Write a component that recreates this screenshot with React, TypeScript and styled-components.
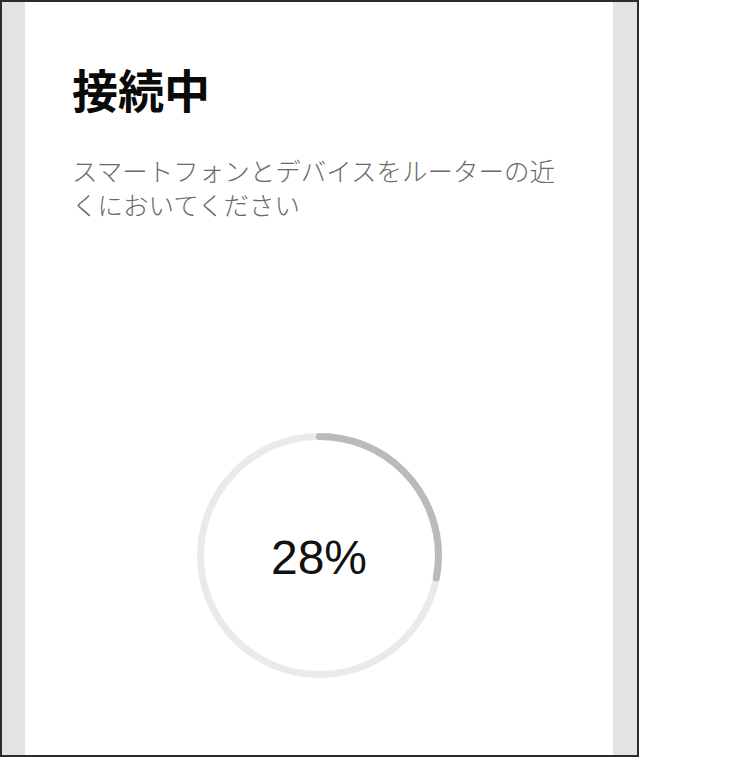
import React from "react";
import styled, { createGlobalStyle } from "styled-components";

const GlobalStyle = createGlobalStyle`
  html, body {
    margin: 0;
    padding: 0;
    background: #fff;
  }
`;

const RING_SIZE = 245;
const RING_STROKE = 7;

const ProgressRing: React.FC<{ value: number }> = ({ value }) => {
  const r = (RING_SIZE - RING_STROKE) / 2;
  const c = 2 * Math.PI * r;
  const filled = (c * value) / 100;
  return (
    <RingWrap>
      <svg
        width={RING_SIZE}
        height={RING_SIZE}
        viewBox={`0 0 ${RING_SIZE} ${RING_SIZE}`}
      >
        <circle
          cx={RING_SIZE / 2}
          cy={RING_SIZE / 2}
          r={r}
          fill="none"
          stroke="#eaeaea"
          strokeWidth={RING_STROKE}
        />
        <circle
          cx={RING_SIZE / 2}
          cy={RING_SIZE / 2}
          r={r}
          fill="none"
          stroke="#bababa"
          strokeWidth={RING_STROKE}
          strokeLinecap="round"
          strokeDasharray={`${filled} ${c}`}
          transform={`rotate(-90 ${RING_SIZE / 2} ${RING_SIZE / 2})`}
        />
      </svg>
      <Percent>{value}%</Percent>
    </RingWrap>
  );
};

const App: React.FC = () => {
  return (
    <>
      <GlobalStyle />
      <Frame>
        <Panel>
          <Title>接続中</Title>
          <Hint>スマートフォンとデバイスをルーターの近くにおいてください</Hint>
          <ProgressRing value={28} />
        </Panel>
      </Frame>
    </>
  );
};

export default App;

const Frame = styled.div`
  box-sizing: border-box;
  width: 639px;
  height: 757px;
  border: 2px solid #2b2b2b;
  background: #e3e3e3;
  padding: 0 24px 0 23px;
  display: flex;
`;

const Panel = styled.main`
  flex: 1;
  background: #fff;
  padding: 58px 47px 0;
  display: flex;
  flex-direction: column;
`;

const Title = styled.h1`
  margin: 0;
  font-family: "Noto Sans CJK JP", "Noto Sans", sans-serif;
  font-size: 46px;
  font-weight: 700;
  line-height: 56px;
  color: #0a0a0a;
`;

const Hint = styled.p`
  margin: 37px 0 0;
  max-width: 500px;
  font-family: "Noto Sans CJK JP", "Noto Sans", sans-serif;
  font-size: 25.5px;
  font-weight: 300;
  line-height: 34px;
  color: #6a6a6a;
`;

const RingWrap = styled.div`
  display: grid;
  align-self: center;
  margin-top: 212px;

  & > * {
    grid-area: 1 / 1;
  }

  svg {
    display: block;
  }
`;

const Percent = styled.span`
  place-self: center;
  margin-top: 4px;
  font-family: "Liberation Sans", Arial, sans-serif;
  font-size: 48px;
  color: #111;
`;
